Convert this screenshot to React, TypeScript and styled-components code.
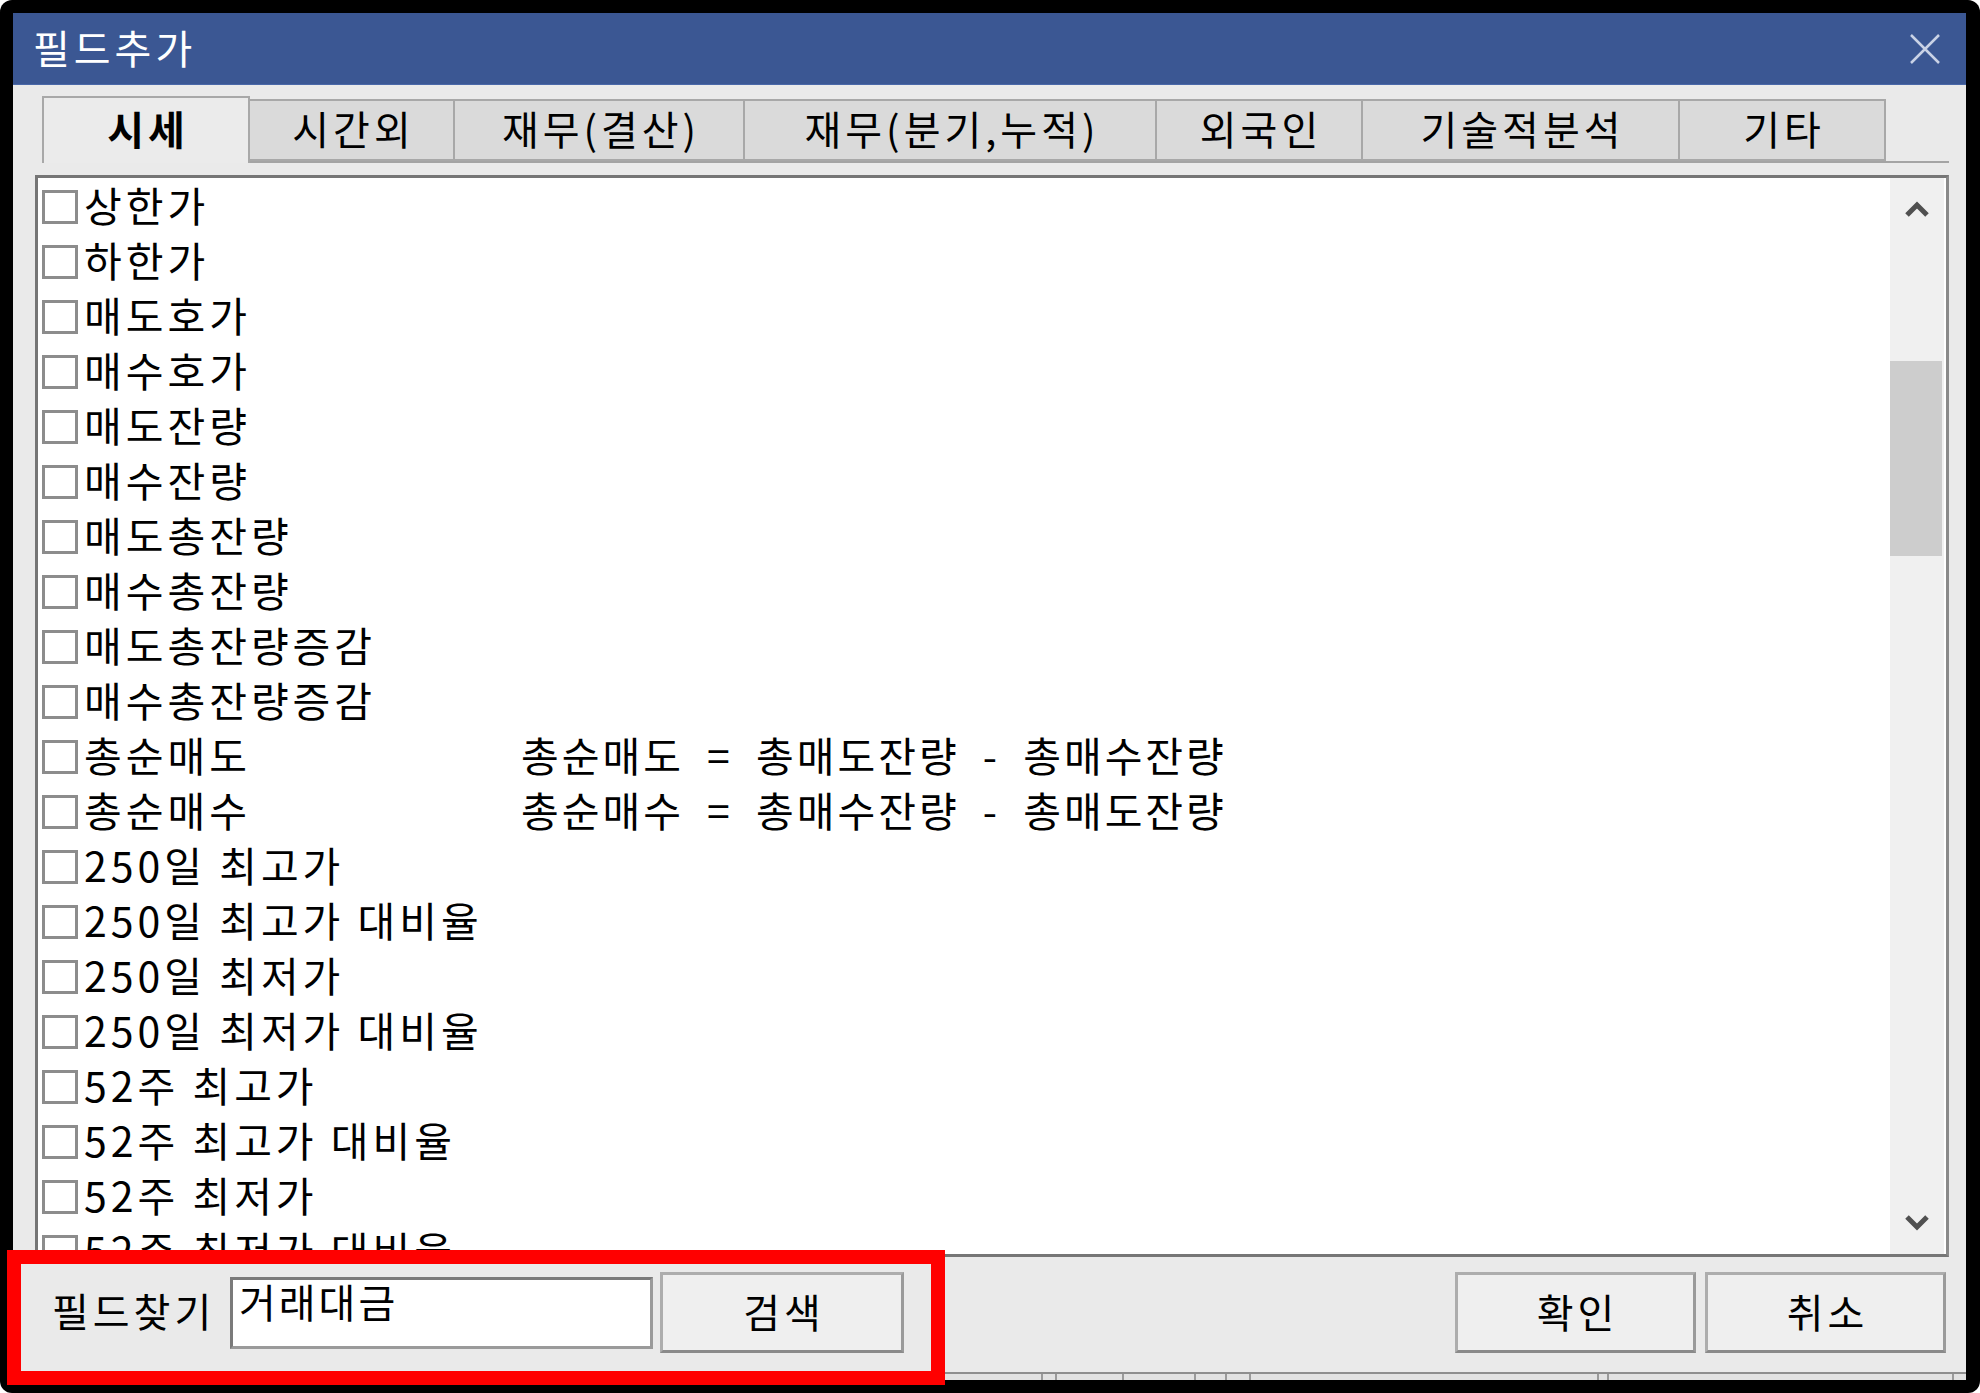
import React from "react";
import styled, { createGlobalStyle } from "styled-components";

const GlobalStyle = createGlobalStyle`
  html, body {
    margin: 0;
    padding: 0;
    background: #ffffff;
  }
  * {
    box-sizing: border-box;
  }
`;

const FONT = `"Noto Sans CJK KR", "Noto Sans", sans-serif`;

// 바깥 검은 테두리
const Frame = styled.div`
  position: relative;
  width: 1980px;
  height: 1393px;
  background: #000;
  border-radius: 12px;
  padding: 13px 14px 0 13px;
  overflow: hidden;
  font-family: ${FONT};
  color: #000;
`;

const Dialog = styled.div`
  display: flex;
  flex-direction: column;
  height: 1359px;
  background: #eaeaea;
`;

const TitleBar = styled.div`
  display: flex;
  align-items: center;
  justify-content: space-between;
  height: 72px;
  padding: 0 25px 0 20px;
  background: #3b5793;
  border-bottom: 1px solid #4a68a8;
`;

const Title = styled.div`
  font-size: 40px;
  line-height: 1;
  letter-spacing: 4px;
  color: #ffffff;
  margin-top: -4px;
`;

const Body = styled.div`
  display: flex;
  flex-direction: column;
  flex: 1;
  padding: 0 17px 0 22px;
`;

const TabStrip = styled.div`
  display: flex;
  align-items: flex-end;
  height: 67px;
  margin: 11px 0 0 7px;
  border-bottom: 2px solid #a4a4a4;
`;

const Tab = styled.div<{ $w: number; $active?: boolean }>`
  display: flex;
  align-items: center;
  justify-content: center;
  width: ${(p) => p.$w}px;
  height: ${(p) => (p.$active ? 67 : 62)}px;
  margin-bottom: ${(p) => (p.$active ? -2 : 0)}px;
  background: ${(p) => (p.$active ? "#ebebeb" : "#dadada")};
  border: 2px solid #a8a8a8;
  border-bottom: ${(p) => (p.$active ? "none" : "2px solid #a8a8a8")};
  border-left: ${(p) => (p.$active ? "2px solid #a8a8a8" : "none")};
  font-size: 40px;
  font-weight: ${(p) => (p.$active ? 700 : 400)};
  letter-spacing: 4px;
  line-height: 1;
  padding: 0 0 ${(p) => (p.$active ? 6 : 4)}px 4px;
`;

const ListBox = styled.div`
  display: flex;
  height: 1082px;
  margin-top: 12px;
  background: #ffffff;
  border: 3px solid #767676;
  border-right-color: #8a8a8a;
`;

const ListContent = styled.div`
  flex: 1;
  overflow: hidden;
  padding: 1px 0 0 4px;
`;

const Row = styled.div`
  display: flex;
  align-items: center;
  height: 55px;
  white-space: pre;
`;

const Check = styled.div`
  width: 36px;
  height: 34px;
  border: 3px solid #8c8c8c;
  background: #fff;
  margin-right: 6px;
  flex-shrink: 0;
`;

const Label = styled.div`
  width: 437px;
  font-size: 41px;
  line-height: 48px;
  letter-spacing: 4px;
  margin-bottom: 6px;
`;

const Desc = styled.div`
  font-size: 41px;
  line-height: 48px;
  letter-spacing: 3px;
  word-spacing: 11px;
  margin-bottom: 6px;
`;

const ScrollBar = styled.div`
  display: flex;
  flex-direction: column;
  width: 54px;
  background: #f0f0f0;
  margin-right: 2px;
`;

const ArrowBtn = styled.div`
  display: flex;
  align-items: center;
  justify-content: center;
  height: 62px;
`;

const Track = styled.div`
  flex: 1;
`;

const Thumb = styled.div`
  width: 52px;
  background: #cdcdcd;
`;

const BottomRow = styled.div`
  display: flex;
  align-items: center;
  height: 111px;
  padding: 0 3px 0 17px;
`;

const FindLabel = styled.div`
  width: 178px;
  font-size: 40px;
  line-height: 1;
  letter-spacing: 4px;
  margin-bottom: 6px;
`;

const Input = styled.div`
  width: 423px;
  height: 72px;
  background: #fff;
  border: 3px solid #7a7a7a;
  border-right-color: #9a9a9a;
  border-bottom-color: #9a9a9a;
  padding: 0 0 0 6px;
  font-size: 40px;
  line-height: 42px;
  letter-spacing: 3px;
`;

const Button = styled.div<{ $w: number; $ml?: number }>`
  display: flex;
  align-items: center;
  justify-content: center;
  width: ${(p) => p.$w}px;
  height: 81px;
  margin-left: ${(p) => p.$ml ?? 0}px;
  background: #efefef;
  border: 3px solid #adadad;
  border-bottom-color: #8a8a8a;
  border-right-color: #9a9a9a;
  font-size: 40px;
  line-height: 1;
  letter-spacing: 4px;
  padding: 0 0 4px 4px;
`;

const Spacer = styled.div`
  flex: 1;
`;

// 다이얼로그 아래로 살짝 보이는 밑 창의 상태줄
const UnderStrip = styled.div`
  display: flex;
  height: 8px;
  background: #e2e2e2;
  border-top: 2px solid #8e8e8e;
`;

const StripCell = styled.div<{ $w: number }>`
  width: ${(p) => p.$w}px;
  border-right: 2px solid #9a9a9a;
`;

// 빨간 강조 표시 (주석)
const Highlight = styled.div`
  position: absolute;
  left: 7px;
  top: 1250px;
  width: 938px;
  height: 135px;
  border: 14px solid #ff0000;
  pointer-events: none;
`;

const tabs = [
  { label: "시세", w: 208, active: true },
  { label: "시간외", w: 205 },
  { label: "재무(결산)", w: 290 },
  { label: "재무(분기,누적)", w: 412 },
  { label: "외국인", w: 206 },
  { label: "기술적분석", w: 317 },
  { label: "기타", w: 206 },
];

const fields: { name: string; desc?: string }[] = [
  { name: "상한가" },
  { name: "하한가" },
  { name: "매도호가" },
  { name: "매수호가" },
  { name: "매도잔량" },
  { name: "매수잔량" },
  { name: "매도총잔량" },
  { name: "매수총잔량" },
  { name: "매도총잔량증감" },
  { name: "매수총잔량증감" },
  { name: "총순매도", desc: "총순매도 = 총매도잔량 - 총매수잔량" },
  { name: "총순매수", desc: "총순매수 = 총매수잔량 - 총매도잔량" },
  { name: "250일 최고가" },
  { name: "250일 최고가 대비율" },
  { name: "250일 최저가" },
  { name: "250일 최저가 대비율" },
  { name: "52주 최고가" },
  { name: "52주 최고가 대비율" },
  { name: "52주 최저가" },
  { name: "52주 최저가 대비율" },
];

const stripCells = [1030, 14, 67, 72, 31, 24, 348, 10, 345];

export default function App() {
  return (
    <>
      <GlobalStyle />
      <Frame>
        <Dialog>
          <TitleBar>
            <Title>필드추가</Title>
            <svg width="32" height="32" viewBox="0 0 32 32">
              <path d="M2 2 L30 30 M30 2 L2 30" stroke="#c9d2e6" strokeWidth="2.5" fill="none" />
            </svg>
          </TitleBar>

          <Body>
            <TabStrip>
              {tabs.map((t) => (
                <Tab key={t.label} $w={t.w} $active={t.active}>
                  {t.label}
                </Tab>
              ))}
            </TabStrip>

            <ListBox>
              <ListContent>
                {fields.map((f) => (
                  <Row key={f.name}>
                    <Check />
                    <Label>{f.name}</Label>
                    {f.desc && <Desc>{f.desc}</Desc>}
                  </Row>
                ))}
              </ListContent>
              <ScrollBar>
                <ArrowBtn>
                  <svg width="26" height="18" viewBox="0 0 26 18">
                    <path d="M3 15 L13 5 L23 15" stroke="#505050" strokeWidth="5" fill="none" />
                  </svg>
                </ArrowBtn>
                <Track>
                  <Thumb style={{ marginTop: 121, height: 195 }} />
                </Track>
                <ArrowBtn>
                  <svg width="26" height="18" viewBox="0 0 26 18">
                    <path d="M3 3 L13 13 L23 3" stroke="#505050" strokeWidth="5" fill="none" />
                  </svg>
                </ArrowBtn>
              </ScrollBar>
            </ListBox>

            <BottomRow>
              <FindLabel>필드찾기</FindLabel>
              <Input>거래대금</Input>
              <Button $w={244} $ml={7}>검색</Button>
              <Spacer />
              <Button $w={241}>확인</Button>
              <Button $w={241} $ml={9}>취소</Button>
            </BottomRow>
          </Body>
        </Dialog>
        <UnderStrip>
          {stripCells.map((w, i) => (
            <StripCell key={i} $w={w} />
          ))}
        </UnderStrip>
        <Highlight />
      </Frame>
    </>
  );
}
